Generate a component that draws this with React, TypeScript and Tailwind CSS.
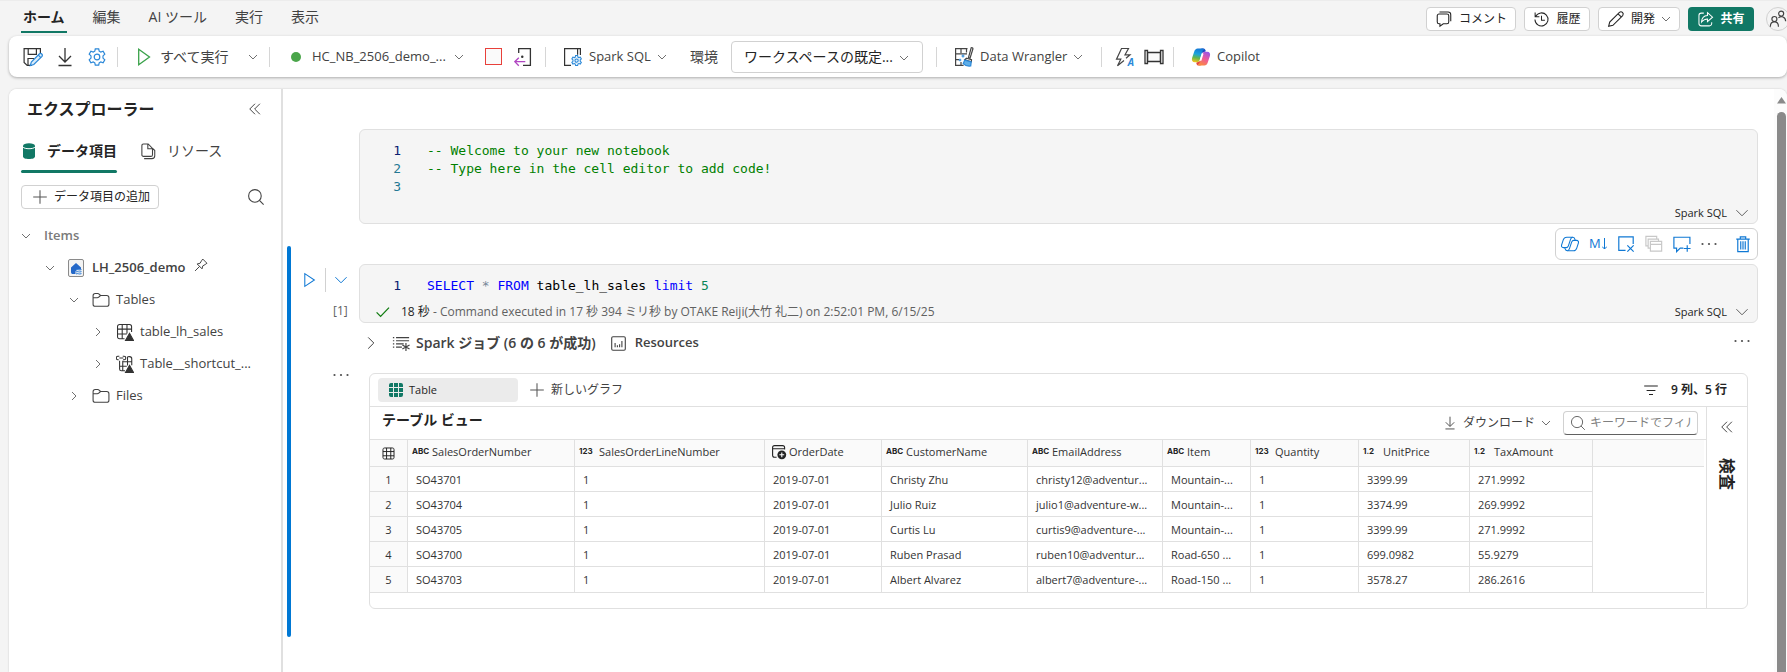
import { useState } from "react";
import type { ReactNode } from "react";

type IconProps = {
  size?: number;
  className?: string;
  stroke?: number;
  children?: ReactNode;
};

function Icon({ size = 20, className = "", stroke = 1.2, children }: IconProps) {
  return (
    <svg
      width={size}
      height={size}
      viewBox="0 0 20 20"
      fill="none"
      stroke="currentColor"
      strokeWidth={stroke}
      className={`shrink-0 ${className}`}
      aria-hidden="true"
    >
      {children}
    </svg>
  );
}

function Chevron({ size = 10, className = "text-[#707070]", dir = "down" }: { size?: number; className?: string; dir?: "down" | "right" }) {
  return (
    <svg width={size} height={size} viewBox="0 0 10 10" fill="none" stroke="currentColor" strokeWidth={10 / size} className={`shrink-0 ${className}`} aria-hidden="true">
      <path d={dir === "down" ? "M1 3l4 4 4-4" : "M3 1l4 4-4 4"} />
    </svg>
  );
}

function Divider() {
  return <span className="h-5 w-px shrink-0 bg-[#d6d6d6]" />;
}

const gearPath =
  "M8.3 1.8h3.4l.5 2.4 1.6.9 2.3-.8 1.7 2.9-1.8 1.7v2.2l1.8 1.7-1.7 2.9-2.3-.8-1.6.9-.5 2.4H8.3l-.5-2.4-1.6-.9-2.3.8-1.7-2.9L4 11.1V8.9L2.2 7.2l1.7-2.9 2.3.8 1.6-.9z";

function SaveIcon() {
  return (
    <Icon className="text-[#333]">
      <path d="M9 18.4H4.2L1.1 15.5V1.6h16.3v5M5.2 1.6v5.8h8.2V1.6M5 18v-6.5h6" />
      <path d="M7.3 18.6l1-3.6 8.2-8.2c1.6-1.2 3.6.8 2.5 2.5l-8.2 8.2z" fill="#d9ecfa" stroke="#2b88d8" />
      <path d="M15.3 8.2l2.5 2.5" stroke="#2b88d8" />
    </Icon>
  );
}

function DownloadIcon({ size = 20, className = "text-[#333]" }: { size?: number; className?: string }) {
  return (
    <Icon size={size} className={className} stroke={1.3}>
      <path d="M10 1v13.500M4 9l6 6 6-6M3.500 18.500h13" />
    </Icon>
  );
}

function ShortcutCodeIcon() {
  return (
    <Icon className="text-[#333]" stroke={1.3}>
      <path d="M4.7 6V1.600h11.700v16.800H9" />
      <path d="M8.2 9.700h.1" strokeWidth={2.4} strokeLinecap="round" />
      <path d="M.8 14.700h10.500M4.800 10.700l-4 4 4 4" stroke="#b146c2" />
    </Icon>
  );
}

function SparkSqlIcon() {
  return (
    <Icon className="text-[#333]">
      <path d="M8 18.400H1.600V1.600h15.800v6.500M14.600 1.800v6" />
      <g transform="translate(7.5 7.5) scale(.61)" stroke="#2b88d8" strokeWidth={1.7}>
        <path d={gearPath} fill="#e3f1fb" />
        <circle cx="10" cy="10" r="2.700" />
      </g>
    </Icon>
  );
}

function WranglerIcon() {
  return (
    <Icon className="text-[#444]">
      <path d="M13.500 1.600H1.600v16.800h8M1.600 6.800H13M1.600 12.600h3.500M7 1.600v4.500M12.500 1.600v4M7 15v3" />
      <path d="M17.200.8c1.200-.3 2 .4 1.600 1.500L16 11.300l-1.600-.4z" fill="#fff" />
      <path d="M12.500 11.200l5 1.500-.2 2-6.500-2z" fill="#fff" />
      <path d="M10.700 13.200l6.500 1.800-.5 4c-3 .4-5.500-.3-7.500-2.300z" fill="#5eaee8" stroke="#2b88d8" />
      <path d="M9 7.500v3M7.500 9h3M6 11.700v2.600M4.700 13h2.600" stroke="#2b88d8" />
    </Icon>
  );
}

function LightningIcon() {
  return (
    <span className="relative block text-[#444]">
      <Icon stroke={1.2}>
        <path d="M10 13.500L3.500 18.700l3.300-6.500H2.500L7.500 1.500h7L11 7.800h5l-4 3.400" />
      </Icon>
      <span className="absolute -bottom-px right-0 text-[10px] font-bold italic leading-3 text-[#2b88d8]">A</span>
    </span>
  );
}

function FilmIcon() {
  return (
    <Icon className="text-[#333]" stroke={1.3}>
      <path d="M3.500 5.500h13v9h-13z" fill="#fafafa" />
      <path d="M1 3.500h2.500v13H1zM16.500 3.500H19v13h-2.500z" />
    </Icon>
  );
}

function CopilotIcon() {
  return (
    <svg width="20" height="20" viewBox="0 0 24 24" className="shrink-0" aria-hidden="true">
      <defs>
        <linearGradient id="copA" x1="0.5" y1="0" x2="0.3" y2="1">
          <stop offset="0" stopColor="#1478d6" />
          <stop offset=".4" stopColor="#1ba3dd" />
          <stop offset=".68" stopColor="#63b64e" />
          <stop offset="1" stopColor="#f5c518" />
        </linearGradient>
        <linearGradient id="copB" x1="0.8" y1="0" x2="0.3" y2="1">
          <stop offset="0" stopColor="#9556e8" />
          <stop offset=".5" stopColor="#ee5a9a" />
          <stop offset="1" stopColor="#fb8b3c" />
        </linearGradient>
      </defs>
      <path d="M17.8 5.2 17.3 3.700C16.900 2.500 16 1.800 14.700 1.800h-1.500c-1.500 0-2.500.9-2.800 2.300L9 9z" fill="#1d49c4" />
      <path d="M6.2 18.800l.5 1.500c.4 1.200 1.300 1.900 2.600 1.900h1.500c1.500 0 2.500-.9 2.800-2.300L15 15z" fill="#e5483e" />
      <path d="M14.500 1.800H8c-2.100 0-3.400 1.600-4.100 3.700L1.300 13.200c-.8 2.800.4 5.100 3.300 5.100h2.600c1.600 0 2.600-.9 3.100-2.400l3-9.700c.5-1.600 1.300-2.800 2.700-2.800z" fill="url(#copA)" />
      <path d="M9.500 22.200H16c2.100 0 3.400-1.600 4.100-3.700l2.600-7.700c.8-2.800-.4-5.100-3.300-5.100h-2.600c-1.600 0-2.600.9-3.100 2.400l-3 9.700c-.5 1.600-1.300 2.800-2.700 2.800z" fill="url(#copB)" />
      <path d="M13.900 8.500l-2.200 7" stroke="#fff" strokeWidth="2" strokeLinecap="round" />
    </svg>
  );
}

function SearchIcon({ size = 18, className = "text-[#424242]" }: { size?: number; className?: string }) {
  return (
    <Icon size={size} className={className}>
      <circle cx="8.800" cy="8.800" r="7" />
      <path d="M13.800 13.800l4.700 4.700" />
    </Icon>
  );
}

function DoubleLeft({ size = 14 }: { size?: number }) {
  return (
    <Icon size={size} className="text-[#424242]" stroke={1.4}>
      <path d="M10 2.500L2.500 10l7.500 7.500M17 2.500L9.500 10l7.500 7.500" />
    </Icon>
  );
}

function PlusIcon({ size = 16 }: { size?: number }) {
  return (
    <Icon size={size} className="text-[#555]" stroke={1.3}>
      <path d="M10 1.500v17M1.500 10h17" />
    </Icon>
  );
}

function DotsIcon() {
  return (
    <svg width="16" height="16" viewBox="0 0 16 16" fill="#505050" className="shrink-0" aria-hidden="true">
      <circle cx="1.500" cy="8" r="1.100" />
      <circle cx="8" cy="8" r="1.100" />
      <circle cx="14.500" cy="8" r="1.100" />
    </svg>
  );
}

function FolderIcon() {
  return (
    <Icon size={18} className="text-[#424242]">
      <path d="M1.200 5.200c0-1.500.9-2.400 2.400-2.400h2.700c.9 0 1.300.3 1.900.9L9.500 5h6.900c1.500 0 2.400.9 2.400 2.400v7.200c0 1.500-.9 2.400-2.400 2.400H3.600c-1.500 0-2.400-.9-2.400-2.400zM1.200 7.500h4.600c.7 0 1.200-.2 1.700-.7L9.500 5" />
    </Icon>
  );
}

function TableTreeIcon({ linked }: { linked?: boolean }) {
  return (
    <Icon size={18} className="text-[#333]">
      {linked ? (
        <>
          <path d="M4 6.500v9c0 1.200.8 2 2 2h4M7.500 6.500v11M12.800 1.800v10M13.500 1.800h1.500c1.200 0 2.500.8 2.500 2.500v7M7.500 7.500h10M4 12.500h8" />
          <path d="M3 5.200H2.200a1.900 1.900 0 010-3.800h1.500M7.500 1.400H9a1.900 1.900 0 010 3.800H7.800M3.700 3.300h4.500" />
        </>
      ) : (
        <path d="M9.500 17.500H4c-1.500 0-2.300-.8-2.300-2.300V4c0-1.500.8-2.300 2.300-2.300h11c1.500 0 2.300.8 2.300 2.300v6M1.700 6.800h15.600M1.700 12.200H12M6.900 1.700v15.800M12.200 1.700v10" />
      )}
      <path d="M15 11.500l4.500 8h-9z" fill="currentColor" />
    </Icon>
  );
}

const menuTabs = ["編集", "AI ツール", "実行", "表示"];

function TopBar() {
  return (
    <header className="flex h-9 shrink-0 items-start justify-between border-t border-[#ececec] pl-[21px]">
      <nav className="flex gap-6 text-sm leading-5 text-[#424242]">
        <button type="button" className="mt-1.5 h-[26px] border-b-2 border-[#117865] px-0.5 pb-1 font-bold text-[#242424]">
          ホーム
        </button>
        {menuTabs.map((t) => (
          <button key={t} type="button" className="mt-1.5 h-6 px-0.5 pb-1">
            {t}
          </button>
        ))}
      </nav>
      <div className="-mr-[3px] mt-1.5 flex gap-2 text-xs text-[#242424]">
        <button type="button" className="flex h-6 w-[90px] items-center justify-center gap-1.5 rounded border border-[#d1d1d1] bg-white">
          <Icon size={18}>
            <path d="M4.500 4.500h8.800c1.200 0 2 .8 2 2v6.800c0 1.200-.8 2-2 2H9.200L5.500 18v-2.700h-1c-1.200 0-2-.8-2-2V6.500c0-1.200.8-2 2-2zM5 2.300h9.500c1.800 0 3 1.200 3 3v7.200" />
          </Icon>
          コメント
        </button>
        <button type="button" className="flex h-6 w-[66px] items-center justify-center gap-1.5 rounded border border-[#d1d1d1] bg-white">
          <Icon size={17}>
            <path d="M3.200 6.300A7.700 7.700 0 112.300 10M2.500 1.800v5h5M10 5.500V11h4" />
          </Icon>
          履歴
        </button>
        <button type="button" className="flex h-6 w-[82px] items-center justify-center gap-1.5 rounded border border-[#d1d1d1] bg-white">
          <Icon size={18}>
            <path d="M1.800 18.200l1.200-4.800L13.800 2.600c2.400-2 5.500 1.200 3.600 3.600L6.600 17zM12.300 4.200l3.500 3.500" />
          </Icon>
          開発
          <Chevron />
        </button>
        <button type="button" className="flex h-6 w-[66px] items-center justify-center gap-1.5 rounded bg-[#117865] font-semibold text-white">
          <Icon size={17}>
            <path d="M8 2.500H5A2.700 2.700 0 002.300 5.200v9.600A2.700 2.700 0 005 17.500h9.600a2.700 2.700 0 002.700-2.700v-1.500" />
            <path d="M12.300 2v3.200C8 5.500 5.500 8.500 5.300 13c2-2.600 4-3.500 7-3.600v3.200l6-5.300z" />
          </Icon>
          共有
        </button>
        <button type="button" aria-label="アカウント" className="ml-1 flex h-6 w-6 items-center justify-center rounded-full border border-[#d1d1d1]">
          <Icon size={18} className="text-[#424242]" stroke={1.3}>
            <circle cx="13.500" cy="4" r="2.800" />
            <circle cx="6" cy="10" r="2.800" />
            <path d="M1.500 18.500c0-7 9-7 9 0M10.500 8.800c3-2.800 8-1.200 8 3.700" />
          </Icon>
        </button>
      </div>
    </header>
  );
}

function Ribbon() {
  return (
    <div className="ml-[9px] flex h-[41px] shrink-0 items-center rounded-lg bg-white pl-[14px] text-[13px] text-[#424242] shadow-[0_1px_3px_rgba(0,0,0,0.3)]">
      <div className="flex w-[94px] items-center gap-3">
        <button type="button" aria-label="保存"><SaveIcon /></button>
        <button type="button" aria-label="ダウンロード"><DownloadIcon /></button>
        <button type="button" aria-label="設定">
          <Icon className="text-[#2b88d8]">
            <path d={gearPath} />
            <circle cx="10" cy="10" r="2.800" />
          </Icon>
        </button>
      </div>
      <Divider />
      <div className="flex w-[151px] items-center pl-[18px]">
        <button type="button" className="flex items-center gap-1 text-sm">
          <Icon className="text-[#3aa24a]" stroke={1.3}>
            <path d="M2.700 2.200v15.600L13.500 10z" />
          </Icon>
          すべて実行
        </button>
        <button type="button" aria-label="実行オプション" className="ml-auto mr-[11px]"><Chevron /></button>
      </div>
      <Divider />
      <div className="flex w-[275px] items-center pl-[21px]">
        <button type="button" className="flex w-[194px] items-center">
          <span className="mr-[11px] h-2.5 w-2.5 rounded-full bg-[#4aa54a]" />
          HC_NB_2506_demo_...
          <Chevron className="ml-2 text-[#707070]" />
        </button>
        <button type="button" aria-label="停止" className="h-[17px] w-[17px] border border-[#e8403a] bg-[#fafafa]" />
        <button type="button" aria-label="切断" className="ml-3"><ShortcutCodeIcon /></button>
      </div>
      <Divider />
      <div className="flex w-[390px] items-center pl-[17px]">
        <button type="button" className="flex w-[127px] items-center gap-1.5">
          <SparkSqlIcon />
          Spark SQL
          <Chevron />
        </button>
        <label htmlFor="env" className="w-[41px] text-sm">環境</label>
        <span className="relative">
          <select id="env" className="h-8 w-48 appearance-none rounded border border-[#d1d1d1] bg-white pl-3 text-sm text-[#242424]">
            <option>ワークスペースの既定...</option>
          </select>
          <Chevron className="pointer-events-none absolute right-3.5 top-3 text-[#707070]" />
        </span>
      </div>
      <Divider />
      <button type="button" className="flex w-[164px] items-center gap-1.5 pl-[17px]">
        <WranglerIcon />
        Data Wrangler
        <Chevron />
      </button>
      <Divider />
      <div className="flex w-[71px] items-center gap-2.5 pl-3">
        <button type="button" aria-label="自動補完"><LightningIcon /></button>
        <button type="button" aria-label="全幅表示"><FilmIcon /></button>
      </div>
      <Divider />
      <button type="button" className="flex items-center gap-1.5 pl-[17px]">
        <CopilotIcon />
        Copilot
      </button>
    </div>
  );
}

type TreeNode = { label: string; indent: string; open?: boolean; kind?: "lakehouse" | "folder" | "table" | "shortcut" };

const tree: TreeNode[] = [
  { label: "Items", indent: "pl-3", open: true },
  { label: "LH_2506_demo", indent: "pl-9", open: true, kind: "lakehouse" },
  { label: "Tables", indent: "pl-[60px]", open: true, kind: "folder" },
  { label: "table_lh_sales", indent: "pl-[84px]", kind: "table" },
  { label: "Table__shortcut_...", indent: "pl-[84px]", kind: "shortcut" },
  { label: "Files", indent: "pl-[60px]", kind: "folder" },
];

function TreeRow({ node }: { node: TreeNode }) {
  return (
    <li className={`flex h-8 items-center text-[13px] text-[#424242] ${node.indent}`}>
      <button type="button" aria-label={node.label} className="flex w-[23px] shrink-0 items-center">
        <Chevron dir={node.open ? "down" : "right"} />
      </button>
      {node.kind === "lakehouse" && (
        <svg width="16" height="18" viewBox="0 0 16 18" className="mr-2 shrink-0" aria-hidden="true">
          <rect x=".5" y=".5" width="15" height="17" rx="1.500" fill="#f3f3f3" stroke="#8a8a8a" />
          <path d="M3 8.500L8 4l5 4.500v2H9l-1.500 2V15H4.200C3 14.500 3 13.500 3 12z" fill="#2468c8" />
          <path d="M8 11c1.500-1.300 3 .8 5.500-.4M8 13c1.500-1.300 3 .8 5.500-.4M8 15c1.500-1.300 3 .8 5.500-.4" stroke="#2b7cd8" fill="none" />
        </svg>
      )}
      {node.kind === "folder" && <span className="w-6"><FolderIcon /></span>}
      {node.kind === "table" && <span className="w-6"><TableTreeIcon /></span>}
      {node.kind === "shortcut" && <span className="w-6"><TableTreeIcon linked /></span>}
      <span className={node.kind === "lakehouse" ? "font-semibold" : !node.kind ? "font-semibold text-[#7a7a7a]" : ""}>{node.label}</span>
      {node.kind === "lakehouse" && (
        <Icon size={14} className="mb-1.5 ml-2 text-[#424242]" stroke={1.4}>
          <path d="M12.500 1.500l6 6-2.500 1.800-3.500 2-1 4.200-7-7 4.200-1 2-3.500zM8 12l-6.500 6.500" />
        </Icon>
      )}
    </li>
  );
}

function Explorer() {
  return (
    <aside className="flex w-[274px] shrink-0 flex-col rounded-tl-lg border-r-2 border-[#e0e0e0] bg-white">
      <div className="flex h-10 items-center justify-between pl-[18px] pr-[19px]">
        <h2 className="text-base font-bold text-[#242424]">エクスプローラー</h2>
        <button type="button" aria-label="折りたたむ"><DoubleLeft /></button>
      </div>
      <div className="mt-1 flex gap-[22px] pl-3 text-sm">
        <button type="button" className="relative flex h-10 items-center gap-2.5 pb-1">
          <svg width="16" height="18" viewBox="0 0 16 18" className="text-[#117865]" aria-hidden="true">
            <path d="M2 4v10.500C2 16.200 4.700 17 8 17s6-.8 6-2.500V4z" fill="currentColor" />
            <ellipse cx="8" cy="4" rx="6" ry="2.700" fill="currentColor" />
            <path d="M2 5c1.300 2.300 10.700 2.300 12 0" stroke="#fff" strokeWidth="1" fill="none" />
          </svg>
          <span className="font-bold text-[#242424]">データ項目</span>
          <span className="absolute bottom-0 left-0 h-[3px] w-full rounded-full bg-[#117865]" />
        </button>
        <button type="button" className="flex h-10 items-center gap-2.5 pb-1 text-[#424242]">
          <Icon size={18}>
            <path d="M5 2.200h5.200l4.800 4.900v7c0 1.200-.6 1.900-1.800 1.900H5c-1.200 0-1.800-.7-1.800-1.900v-10C3.200 2.800 3.800 2.200 5 2.200zM9.800 2.500v5h5M5.700 18.500h8.600c2 0 3.200-1.200 3.200-3.200V9.500L15.500 7.300" />
          </Icon>
          リソース
        </button>
      </div>
      <div className="mt-3 flex items-center justify-between pl-3 pr-4">
        <button type="button" className="flex h-6 w-[138px] items-center gap-1.5 rounded border border-[#d1d1d1] pl-2.5 text-xs text-[#242424]">
          <PlusIcon />
          データ項目の追加
        </button>
        <button type="button" aria-label="検索"><SearchIcon /></button>
      </div>
      <ul className="mt-[11px]">
        {tree.map((n) => (
          <TreeRow key={n.label} node={n} />
        ))}
      </ul>
    </aside>
  );
}

function LanguagePicker() {
  return (
    <button type="button" className="flex h-5 items-center gap-2 text-[11px] text-[#242424]">
      Spark SQL
      <Chevron size={14} className="text-[#616161]" />
    </button>
  );
}

function CodeLine({ n, active, children }: { n: number; active?: boolean; children?: ReactNode }) {
  return (
    <div className="flex h-[18px] items-center whitespace-pre font-['DejaVu_Sans_Mono','Liberation_Mono',monospace] text-[13px] leading-[18px]">
      <span className={`w-[41px] text-right ${active ? "text-[#0b216f]" : "text-[#237893]"}`}>{n}</span>
      <span className="pl-[26px]">{children}</span>
    </div>
  );
}

function CellToolbar() {
  return (
    <div className="absolute -top-[18px] right-0 flex h-8 w-[203px] items-center rounded-md border border-[#d1d1d1] bg-white pl-[5px] text-[#0f78d4]">
      <button type="button" aria-label="Copilot" className="w-7">
        <Icon size={18} stroke={1.2}>
          <path d="M6.500 2.500H13c1.500 0 2 .8 2.400 2l.4 1.500h1.500c1.800 0 2.500 1.400 2 3l-1.800 5.500c-.6 1.800-1.500 3-3.500 3H7c-1.500 0-2-.8-2.400-2L4.200 14H2.700c-1.800 0-2.500-1.400-2-3l1.800-5.500c.6-1.800 1.500-3 4-3z" />
          <path d="M13 2.500c-1.500 0-2 1-2.400 2.300L8.200 12c-.5 1.400-1.200 2-2.500 2H4.200M7 17.500c1.500 0 2-1 2.400-2.300L11.800 8c.5-1.400 1.200-2 2.500-2h1.500" />
        </Icon>
      </button>
      <button type="button" aria-label="マークダウンに変換" className="flex w-7 items-center gap-px text-[13px]">
        M
        <svg width="5" height="12" viewBox="0 0 5 12" fill="none" stroke="currentColor" aria-hidden="true">
          <path d="M2.500 0v11M0 8.500l2.500 2.500L5 8.500" />
        </svg>
      </button>
      <button type="button" aria-label="出力をクリア" className="w-7">
        <Icon size={18} stroke={1.3}>
          <path d="M9.500 17H2V2h16v8" />
          <path d="M11.500 11.500l7 7M18.500 11.500l-7 7" />
        </Icon>
      </button>
      <button type="button" aria-label="複製" className="w-7 text-[#c8c8c8]">
        <Icon size={18} stroke={1.3}>
          <path d="M6 7h12.500v11H6zM6 10.500h12.500M6 14.500H3.500V4.500H15V7M3.500 12H1V1.500h12v3" />
        </Icon>
      </button>
      <button type="button" aria-label="コメントの追加" className="w-7">
        <Icon size={18} stroke={1.3}>
          <path d="M18.800 10V2.500H1v12h3v4l4-4h3.500M12 15h7.500M15.800 11.300v7.400" />
        </Icon>
      </button>
      <button type="button" aria-label="その他" className="w-[33px]"><DotsIcon /></button>
      <button type="button" aria-label="削除">
        <Icon size={18} stroke={1.3}>
          <path d="M2.500 4.500h15M7 4.500V2h6v2.500M4.200 4.500V18.500h11.600V4.500" />
          <path d="M7.500 7v9M10 7v9M12.500 7v9" />
        </Icon>
      </button>
    </div>
  );
}

const columns = [
  { name: "SalesOrderNumber", type: "ABC", width: "w-[167px]" },
  { name: "SalesOrderLineNumber", type: "123", width: "w-[190px]" },
  { name: "OrderDate", type: "date", width: "w-[117px]" },
  { name: "CustomerName", type: "ABC", width: "w-[146px]" },
  { name: "EmailAddress", type: "ABC", width: "w-[135px]" },
  { name: "Item", type: "ABC", width: "w-[88px]" },
  { name: "Quantity", type: "123", width: "w-[108px]" },
  { name: "UnitPrice", type: "1.2", width: "w-[111px]" },
  { name: "TaxAmount", type: "1.2", width: "w-[123px]" },
];

const rows = [
  ["SO43701", "1", "2019-07-01", "Christy Zhu", "christy12@adventur...", "Mountain-...", "1", "3399.99", "271.9992"],
  ["SO43704", "1", "2019-07-01", "Julio Ruiz", "julio1@adventure-w...", "Mountain-...", "1", "3374.99", "269.9992"],
  ["SO43705", "1", "2019-07-01", "Curtis Lu", "curtis9@adventure-...", "Mountain-...", "1", "3399.99", "271.9992"],
  ["SO43700", "1", "2019-07-01", "Ruben Prasad", "ruben10@adventur...", "Road-650 ...", "1", "699.0982", "55.9279"],
  ["SO43703", "1", "2019-07-01", "Albert Alvarez", "albert7@adventure-...", "Road-150 ...", "1", "3578.27", "286.2616"],
];

function TypeBadge({ type }: { type: string }) {
  if (type === "date") {
    return (
      <Icon size={16} className="ml-0.5 text-[#242424]" stroke={1.4}>
        <path d="M7 16.500H4.500C3 16.500 2 15.500 2 14V4.500C2 3 3 2 4.500 2h10C16 2 17 3 17 4.500V7M2 6h15" />
        <circle cx="13.500" cy="13.500" r="5.500" fill="currentColor" stroke="none" />
        <path d="M13.500 10.500v6M10.500 13.500h6" stroke="#fff" />
      </Icon>
    );
  }
  return <span className="pb-0.5 font-['Inter',sans-serif] text-[8px] font-bold leading-3 text-[#242424]">{type}</span>;
}

function ResultTable() {
  return (
    <table className="w-full table-fixed border-separate border-spacing-0 text-left text-[11px] text-[#333]">
      <thead>
        <tr className="h-[27px] bg-[#fafafa]">
          <th className="w-[38px] border-b border-r border-[#e0e0e0] p-0 pl-3">
            <Icon size={13} className="text-[#242424]" stroke={1.5}>
              <path d="M4 1.500h12c1.600 0 2.500.9 2.500 2.500v12c0 1.600-.9 2.500-2.500 2.500H4c-1.600 0-2.500-.9-2.500-2.500V4c0-1.600.9-2.500 2.500-2.500zM1.500 7h17M1.500 13.500h17M7 1.500v17M13.500 1.500v17" />
            </Icon>
          </th>
          {columns.map((c) => (
            <th key={c.name} className={`border-b border-r border-[#e0e0e0] p-0 pb-0.5 pl-1 font-normal ${c.width}`}>
              <div className="flex items-center">
                <span className="flex w-5 shrink-0 items-center"><TypeBadge type={c.type} /></span>
                <span>{c.name}</span>
              </div>
            </th>
          ))}
          <th className="border-b border-[#e0e0e0] p-0" />
        </tr>
      </thead>
      <tbody>
        {rows.map((r, i) => (
          <tr key={r[0]} className="h-[25px] last:h-[26px]">
            <td className="border-b border-r border-[#e0e0e0] bg-[#fafafa] p-0 pt-0.5 text-center">{i + 1}</td>
            {r.map((v, j) => (
              <td key={j} className="overflow-hidden whitespace-nowrap border-b border-r border-[#e0e0e0] p-0 pl-2 pt-0.5">{v}</td>
            ))}
            <td className={i === rows.length - 1 ? "border-b border-[#e0e0e0]" : ""} />
          </tr>
        ))}
      </tbody>
    </table>
  );
}

function OutputPanel() {
  const [keyword, setKeyword] = useState("");

  return (
    <div className="mx-2.5 min-w-0 flex-1 rounded-md border border-[#e0e0e0] bg-white">
      <div className="flex h-[33px] items-center justify-between border-b border-[#e0e0e0] pl-2 pr-5 text-xs">
        <div className="flex items-center">
          <button type="button" className="flex h-6 w-[140px] items-center gap-1.5 rounded bg-[#ebebeb] pl-[11px] text-[11px] font-medium text-[#242424]">
            <svg width="14" height="14" viewBox="0 0 14 14" fill="#117865" aria-hidden="true">
              <path d="M2 0h2v4H0V2a2 2 0 012-2zM5 0h4v4H5zM10 0h2a2 2 0 012 2v2h-4zM0 5h4v4H0zM5 5h4v4H5zM10 5h4v4h-4zM0 10h4v4H2a2 2 0 01-2-2zM5 10h4v4H5zM10 10h4v2a2 2 0 01-2 2h-2z" />
            </svg>
            Table
          </button>
          <button type="button" className="ml-[11px] flex items-center gap-1.5 text-[#424242]">
            <PlusIcon />
            新しいグラフ
          </button>
        </div>
        <div className="flex items-center gap-3 font-semibold text-[#242424]">
          <Icon size={16} stroke={1.3}>
            <path d="M1.500 5h17M4.500 10.500h11M7.500 15.500h5" />
          </Icon>
          9 列、5 行
        </div>
      </div>
      <div className="flex">
        <div className="min-w-0 flex-1 pb-[15px]">
          <div className="flex h-[33px] items-center justify-between border-b border-[#e0e0e0] pl-3 pr-2">
            <h3 className="pb-1.5 text-sm font-bold text-[#242424]">テーブル ビュー</h3>
            <div className="flex items-center text-xs text-[#424242]">
              <button type="button" className="flex items-center gap-1.5">
                <DownloadIcon size={14} className="text-[#424242]" />
                ダウンロード
                <Chevron />
              </button>
              <label className="ml-3 flex h-6 w-[135px] items-center gap-1 overflow-hidden rounded border border-[#d1d1d1] border-b-[#616161] px-1.5">
                <SearchIcon size={16} className="text-[#616161]" />
                <input
                  type="text"
                  aria-label="キーワードでフィルター"
                  placeholder="キーワードでフィルター"
                  value={keyword}
                  onChange={(e) => setKeyword(e.target.value)}
                  className="w-full min-w-0 text-xs outline-none placeholder:text-[#808080]"
                />
              </label>
            </div>
          </div>
          <div className="pr-0.5">
            <ResultTable />
          </div>
        </div>
        <div className="flex w-[41px] shrink-0 flex-col items-center border-l border-[#e0e0e0] pt-[13px]">
          <button type="button" aria-label="検査を開く"><DoubleLeft /></button>
          <span className="mt-6 text-base font-bold leading-5 text-[#242424] [text-orientation:sideways] [writing-mode:vertical-rl]">検査</span>
        </div>
      </div>
    </div>
  );
}

function Notebook() {
  return (
    <main className="min-w-0 flex-1 pt-10">
      <div className="ml-[76px] mr-4 flex h-[95px] flex-col justify-between rounded-md border border-[#e0e0e0] bg-[#f5f5f5] pt-3">
        <div>
          <CodeLine n={1} active><span className="text-[#008000]">-- Welcome to your new notebook</span></CodeLine>
          <CodeLine n={2}><span className="text-[#008000]">-- Type here in the cell editor to add code!</span></CodeLine>
          <CodeLine n={3} />
        </div>
        <div className="flex justify-end pr-2"><LanguagePicker /></div>
      </div>

      <section className="relative ml-1 mr-4 mt-[22px] flex">
        <CellToolbar />
        <span className="w-1 shrink-0 rounded-full bg-[#0078d4]" />
        <div className="min-w-0 flex-1 pb-7 pt-[18px]">
          <div className="flex">
            <div className="w-[68px] shrink-0 pl-[11px] pt-1">
              <div className="flex items-center text-[#0f78d4]">
                <button type="button" aria-label="セルの実行" className="w-[23px]">
                  <Icon size={16} stroke={1.3}>
                    <path d="M3.500 2v16L15.500 10z" />
                  </Icon>
                </button>
                <span className="h-6 w-px bg-[#d1d1d1]" />
                <button type="button" aria-label="セルを折りたたむ" className="ml-2"><Chevron size={14} className="text-[#0f78d4]" /></button>
              </div>
              <div className="mt-2.5 w-[50px] pl-[31px] text-xs leading-[18px] text-[#616161]">[1]</div>
            </div>
            <div className="flex h-[59px] flex-1 flex-col justify-between rounded-md border border-[#e0e0e0] bg-[#f5f5f5] pt-3">
              <CodeLine n={1} active>
                <span className="text-[#0000ff]">SELECT</span>
                <span className="text-[#778899]"> * </span>
                <span className="text-[#0000ff]">FROM</span>
                <span className="text-black"> table_lh_sales </span>
                <span className="text-[#0000ff]">limit</span>
                <span className="text-[#098658]"> 5</span>
              </CodeLine>
              <div className="flex items-center justify-between pl-[15px] pr-2 text-xs text-[#616161]">
                <div className="flex items-center">
                  <Icon size={16} className="mr-2.5 text-[#107c10]" stroke={1.6}>
                    <path d="M2 10.500l5 5L17.500 4.500" />
                  </Icon>
                  <span><span className="text-[#242424]">18 秒</span> - Command executed in 17 秒 394 ミリ秒 by OTAKE Reiji(大竹 礼二) on 2:52:01 PM, 6/15/25</span>
                </div>
                <LanguagePicker />
              </div>
            </div>
          </div>

          <div className="flex h-10 items-center justify-between pl-[73px] font-semibold text-[#424242]">
            <div className="flex items-center">
              <button type="button" aria-label="展開"><Chevron dir="right" size={14} className="text-[#424242]" /></button>
              <Icon size={18} className="ml-3.5 mr-1.5" stroke={1.3}>
                <path d="M1 4h1.500M4.500 4H19M1 7.500h1.500M4.500 7.500H19M1 11h1.500M4.500 11H13M1 14.500h1.500M4.500 14.500H11" />
                <path d="M15.500 10v9M11.500 12.300l8 4.400M19.500 12.300l-8 4.400" />
              </Icon>
              <span className="text-sm">Spark ジョブ (6 の 6 が成功)</span>
              <Icon size={17} className="ml-3.5 mr-2" stroke={1.3}>
                <rect x="2" y="2" width="16" height="16" rx="1.500" />
                <path d="M6 14.500v-5M8.700 14.500v-2.500M11.300 14.500v-3.500M14 14.500V7" />
              </Icon>
              <span className="text-[13px]">Resources</span>
            </div>
            <button type="button" aria-label="その他" className="mb-1 mr-2"><DotsIcon /></button>
          </div>

          <div className="mt-2.5 flex">
            <div className="w-[68px] shrink-0 pl-[42px]">
              <button type="button" aria-label="出力オプション" className="flex h-1 items-center"><DotsIcon /></button>
            </div>
            <OutputPanel />
          </div>
        </div>
      </section>
    </main>
  );
}

export default function App() {
  return (
    <div className="flex h-screen flex-col overflow-hidden bg-[#f4f4f4] font-['Open_Sans','Noto_Sans_CJK_JP',sans-serif]">
      <TopBar />
      <Ribbon />
      <div className="ml-[9px] mt-3 flex min-h-0 flex-1 rounded-t-lg bg-white shadow-[0_0_2px_rgba(0,0,0,0.2)]">
        <Explorer />
        <Notebook />
        <div className="flex w-[13px] shrink-0 flex-col rounded-tr-lg bg-[#fcfcfc] pl-[3px] pt-2">
          <svg width="9" height="7" viewBox="0 0 9 7" fill="#8a8a8a" className="mb-2" aria-hidden="true">
            <path d="M4.500 0L9 6.500H0z" />
          </svg>
          <div className="w-[9px] flex-1 rounded-t-full bg-[#8a8a8a]" />
        </div>
      </div>
    </div>
  );
}
